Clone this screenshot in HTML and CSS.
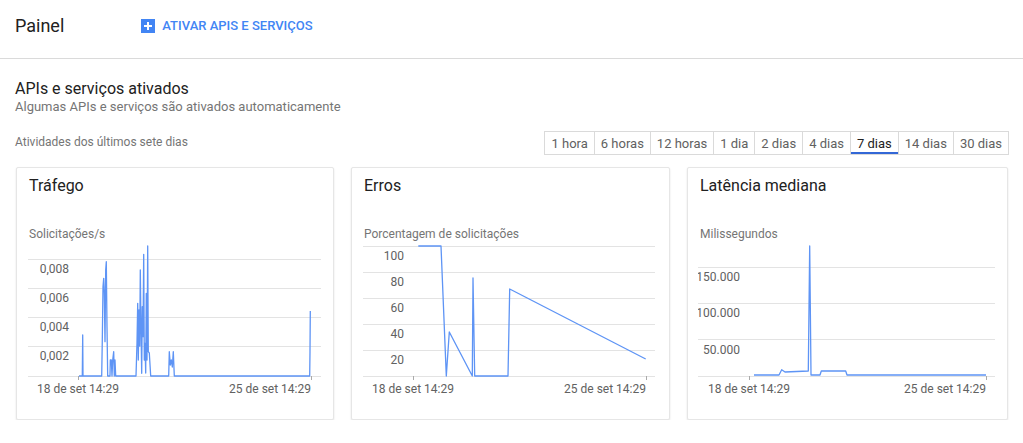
FILE: index.html
```html
<!DOCTYPE html>
<html lang="pt">
<head>
<meta charset="utf-8">
<title>Painel</title>
<link rel="stylesheet" href="styles.css">
</head>
<body>
<header class="header">
  <h1 class="page-title">Painel</h1>
  <a class="enable-btn" href="#">
    <svg class="plus-icon" width="14" height="14" viewBox="0 0 14 14"><rect width="14" height="14" fill="#4285f4"/><path d="M7 3v8M3 7h8" stroke="#fff" stroke-width="2"/></svg>
    <span>ATIVAR APIS E SERVIÇOS</span>
  </a>
</header>
<main class="content">
  <h2 class="section-title">APIs e serviços ativados</h2>
  <p class="section-sub">Algumas APIs e serviços são ativados automaticamente</p>
  <div class="range-row">
    <span class="range-label">Atividades dos últimos sete dias</span>
    <div class="range-group">
      <button class="range-btn">1 hora</button>
      <button class="range-btn">6 horas</button>
      <button class="range-btn">12 horas</button>
      <button class="range-btn">1 dia</button>
      <button class="range-btn">2 dias</button>
      <button class="range-btn">4 dias</button>
      <button class="range-btn active">7 dias</button>
      <button class="range-btn">14 dias</button>
      <button class="range-btn">30 dias</button>
    </div>
  </div>
  <div class="cards">
    <section class="card">
      <h3 class="card-title">Tráfego</h3>
      <div class="axis-title">Solicitações/s</div>
      <svg class="chart" width="318" height="160" viewBox="0 0 318 160">
        <g class="grid">
          <line x1="11" y1="17.5" x2="304" y2="17.5"/>
          <line x1="11" y1="46.5" x2="304" y2="46.5"/>
          <line x1="11" y1="75.5" x2="304" y2="75.5"/>
          <line x1="11" y1="104.5" x2="304" y2="104.5"/>
          <line x1="11" y1="134.5" x2="304" y2="134.5"/>
        </g>
        <g class="ylab">
          <text x="52" y="31">0,008</text>
          <text x="52" y="60">0,006</text>
          <text x="52" y="89">0,004</text>
          <text x="52" y="118">0,002</text>
        </g>
        <g class="ticks"><line x1="61.5" y1="134" x2="61.5" y2="138"/><line x1="294.5" y1="134" x2="294.5" y2="138"/></g>
        <text class="xlab" x="61" y="151" text-anchor="middle">18 de set 14:29</text>
        <text class="xlab" x="294" y="151" text-anchor="end">25 de set 14:29</text>
        <polyline class="series" points="62,134 65.3,134 65.7,93 66,134 84.7,134 85.3,98 86,44.7 86.7,36.3 87.3,51.3 88,99.7 88.7,28 89.3,19.7 90,84.7 90.7,134 93,134 93.3,118 94.3,118 95,134 95.7,118 96.7,109.7 97.3,134 98,118 98.7,134 119,134 120,100.7 120.7,61.3 121.3,118 122,68 122.7,104 123.3,28 124,84.7 124.7,131.3 125.3,64.7 126,94.7 126.7,12.3 127.3,118 128,101.3 128.7,131 129.3,51.3 130,118 130.7,4 131.3,109.7 132.3,111 133.7,134 151.7,134 152.3,109.7 153.3,123 154.3,118 155.3,125 156.3,109.7 157.3,134 292.7,134 293,109.7 293.3,69"/>
      </svg>
    </section>
    <section class="card">
      <h3 class="card-title">Erros</h3>
      <div class="axis-title">Porcentagem de solicitações</div>
      <svg class="chart" width="318" height="160" viewBox="0 0 318 160">
        <g class="grid">
          <line x1="11" y1="4.5" x2="303" y2="4.5"/>
          <line x1="11" y1="30.5" x2="303" y2="30.5"/>
          <line x1="11" y1="56.5" x2="303" y2="56.5"/>
          <line x1="11" y1="82.5" x2="303" y2="82.5"/>
          <line x1="11" y1="108.5" x2="303" y2="108.5"/>
          <line x1="11" y1="134.5" x2="303" y2="134.5"/>
        </g>
        <g class="ylab">
          <text x="52" y="18">100</text>
          <text x="52" y="44">80</text>
          <text x="52" y="70">60</text>
          <text x="52" y="96">40</text>
          <text x="52" y="122">20</text>
        </g>
        <g class="ticks"><line x1="61.5" y1="134" x2="61.5" y2="138"/><line x1="294.5" y1="134" x2="294.5" y2="138"/></g>
        <text class="xlab" x="61" y="151" text-anchor="middle">18 de set 14:29</text>
        <text class="xlab" x="294" y="151" text-anchor="end">25 de set 14:29</text>
        <polyline class="series" points="66.3,4 89,4 94.3,134 97.3,90 120.3,134 121,36 122.7,134 156,134 157.7,47 293.7,117"/>
      </svg>
    </section>
    <section class="card">
      <h3 class="card-title">Latência mediana</h3>
      <div class="axis-title">Milissegundos</div>
      <svg class="chart" width="320" height="160" viewBox="0 0 320 160">
        <defs><clipPath id="lclip"><rect x="10" y="0" width="310" height="160"/></clipPath></defs>
        <g class="grid">
          <line x1="10" y1="25.5" x2="307" y2="25.5"/>
          <line x1="10" y1="61.5" x2="307" y2="61.5"/>
          <line x1="10" y1="97.5" x2="307" y2="97.5"/>
          <line x1="10" y1="134.5" x2="307" y2="134.5"/>
        </g>
        <g class="ylab" clip-path="url(#lclip)">
          <text x="52" y="39">150.000</text>
          <text x="52" y="75">100.000</text>
          <text x="52" y="112">50.000</text>
        </g>
        <g class="ticks"><line x1="61.5" y1="134" x2="61.5" y2="138"/><line x1="298.5" y1="134" x2="298.5" y2="138"/></g>
        <text class="xlab" x="61" y="151" text-anchor="middle">18 de set 14:29</text>
        <text class="xlab" x="298" y="151" text-anchor="end">25 de set 14:29</text>
        <polyline class="series" points="66,133 91,133 93.7,127.7 97,130 120.3,129 121.7,4 123,133 132,133 133.3,129 157.7,129 159,133 298,133"/>
      </svg>
    </section>
  </div>
</main>
</body>
</html>
```

FILE: styles.css
```css
* { box-sizing: border-box; }
body {
  margin: 0;
  background: #fff;
  font-family: Roboto, "Noto Sans", Arial, sans-serif;
  color: #212121;
}
.header {
  display: flex;
  align-items: center;
  height: 59px;
  padding: 0 16px 6px 15px;
  border-bottom: 1px solid #dadada;
}
.page-title {
  margin: 0;
  font-size: 18px;
  font-weight: 400;
  line-height: 24px;
  color: #212121;
}
.enable-btn {
  display: flex;
  align-items: center;
  gap: 7px;
  margin-left: 77px;
  text-decoration: none;
  color: #4285f4;
  font-size: 13px;
  font-weight: 500;
  line-height: 16px;
}
.plus-icon { display: block; }
.content { padding: 20px 14px 0 15px; }
.section-title {
  margin: 0;
  font-size: 16px;
  font-weight: 400;
  line-height: 20px;
  color: #212121;
}
.section-sub {
  margin: 0;
  font-size: 13px;
  line-height: 16px;
  color: #757575;
}
.range-row {
  display: flex;
  align-items: center;
  justify-content: space-between;
  margin-top: 16px;
}
.range-label {
  font-size: 12px;
  color: #757575;
  margin-top: -3px;
}
.range-group { display: flex; }
.range-btn {
  height: 24px;
  padding: 0 6px;
  margin-left: -1px;
  border: 1px solid #dadada;
  background: #fff;
  font-family: Roboto, "Noto Sans", Arial, sans-serif;
  font-size: 13px;
  color: #616161;
  cursor: pointer;
}
.range-btn.active {
  color: #212121;
  box-shadow: inset 0 -2px 0 #3367d6;
}
.cards {
  display: grid;
  grid-template-columns: 318px 319px 321px;
  column-gap: 17px;
  margin-top: 12px;
  padding-left: 1px;
}
.card {
  height: 253px;
  background: #fff;
  border: 1px solid #e6e6e6;
  border-radius: 2px;
  box-shadow: 0 1px 2px rgba(0,0,0,0.12);
  padding-top: 8px;
}
.card-title {
  margin: 0;
  padding-left: 12px;
  font-size: 16px;
  font-weight: 400;
  line-height: 20px;
  color: #212121;
}
.axis-title {
  margin-top: 30px;
  padding-left: 12px;
  font-size: 12px;
  line-height: 16px;
  color: #757575;
}
.chart { display: block; overflow: visible; }
.grid line { stroke: #e3e3e3; stroke-width: 1; }
.ticks line { stroke: #aaa; stroke-width: 1; }
.ylab text {
  font-family: Roboto, "Noto Sans", Arial, sans-serif;
  font-size: 12px;
  fill: #616161;
  text-anchor: end;
}
.xlab {
  font-family: Roboto, "Noto Sans", Arial, sans-serif;
  font-size: 12px;
  fill: #616161;
}
.series {
  fill: none;
  stroke: #5e94f5;
  stroke-width: 1.3;
  stroke-linejoin: round;
}
```
